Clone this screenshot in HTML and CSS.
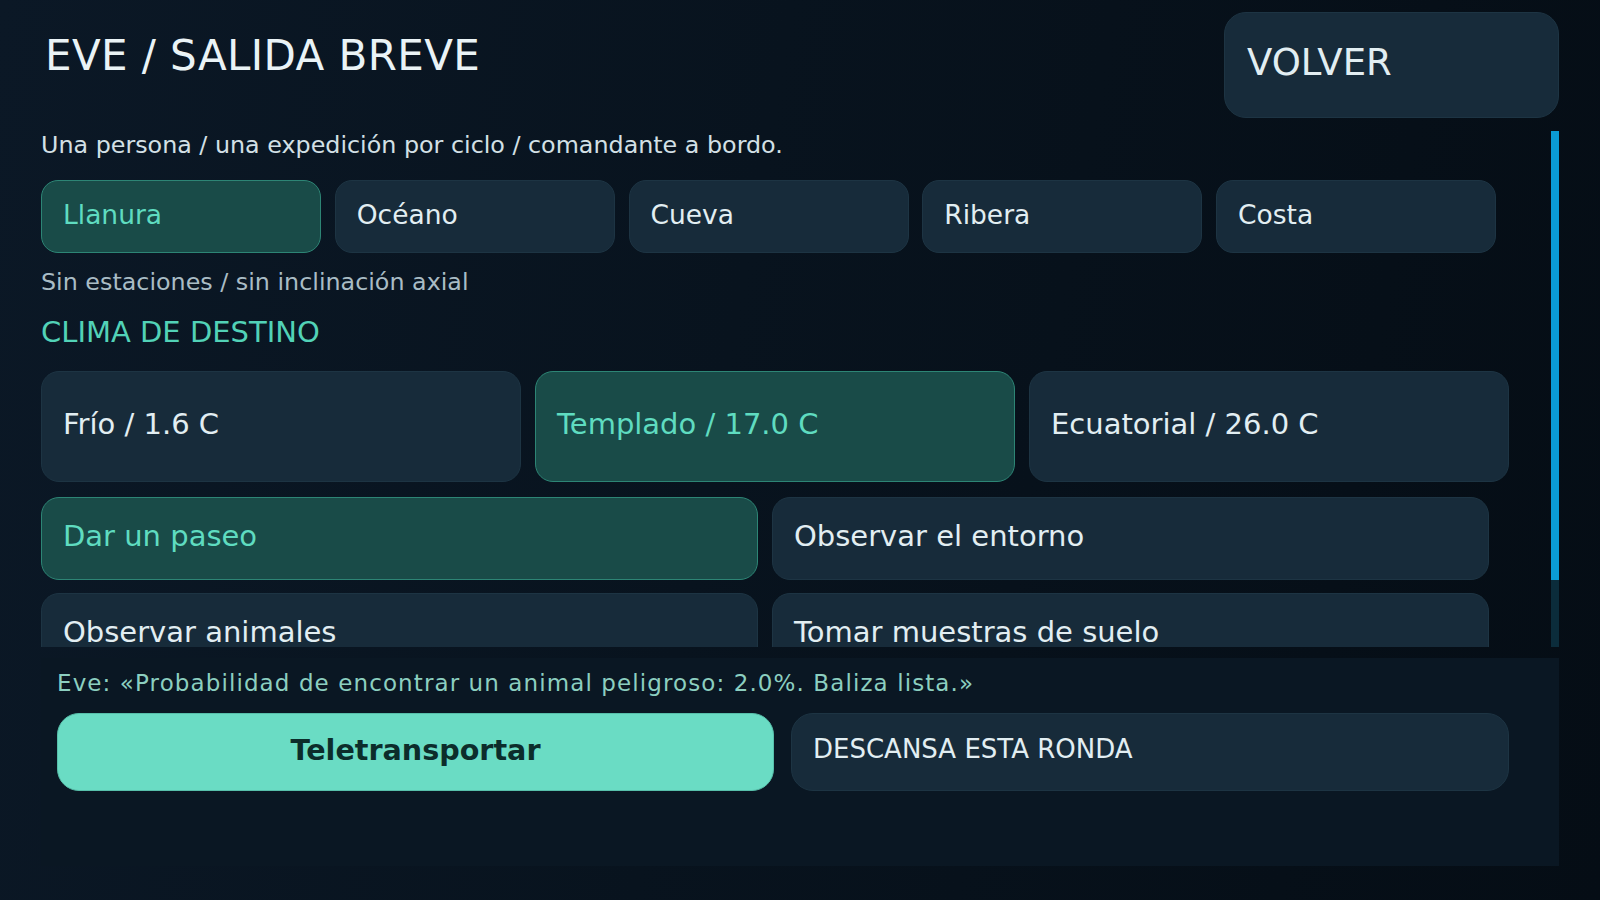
FILE: index.html
```html
<!DOCTYPE html>
<html lang="es">
<head>
<meta charset="utf-8">
<title>EVE / SALIDA BREVE</title>
<link rel="stylesheet" href="styles.css">
</head>
<body>
<div class="app">
  <header class="top">
    <h1 class="title">EVE / SALIDA BREVE</h1>
    <button class="btn back">VOLVER</button>
  </header>

  <div class="scroll-area">
    <div class="scroll">
      <p class="lead">Una persona / una expedición por ciclo / comandante a bordo.</p>
      <div class="chips">
        <button class="btn chip selected">Llanura</button>
        <button class="btn chip">Océano</button>
        <button class="btn chip">Cueva</button>
        <button class="btn chip">Ribera</button>
        <button class="btn chip">Costa</button>
      </div>
      <p class="note">Sin estaciones / sin inclinación axial</p>
      <h2 class="section">CLIMA DE DESTINO</h2>
      <div class="climates">
        <button class="btn climate">Frío / 1.6 C</button>
        <button class="btn climate selected">Templado / 17.0 C</button>
        <button class="btn climate">Ecuatorial / 26.0 C</button>
      </div>
      <div class="activities">
        <button class="btn activity selected">Dar un paseo</button>
        <button class="btn activity">Observar el entorno</button>
        <button class="btn activity">Observar animales</button>
        <button class="btn activity">Tomar muestras de suelo</button>
      </div>
    </div>
    <div class="scrollbar"><div class="thumb"></div></div>
  </div>

  <section class="panel">
    <p class="eve">Eve: «Probabilidad de encontrar un animal peligroso: 2.0%. Baliza lista.»</p>
    <div class="actions">
      <button class="btn primary">Teletransportar</button>
      <button class="btn secondary">DESCANSA ESTA RONDA</button>
    </div>
  </section>
</div>
</body>
</html>
```

FILE: styles.css
```css
* {
  box-sizing: border-box;
}

html, body {
  margin: 0;
  padding: 0;
  height: 100%;
}

body {
  font-family: "DejaVu Sans", "Liberation Sans", sans-serif;
  color: #e2eef2;
  background: linear-gradient(100deg, #0b1826 0%, #08131e 45%, #050d15 100%);
  overflow: hidden;
}

.app {
  width: 1600px;
  height: 900px;
  padding: 12px 41px 0 41px;
  display: flex;
  flex-direction: column;
}

.btn {
  font-family: inherit;
  color: #e2eef2;
  background: #172b3a;
  border: 1px solid #1d3443;
  text-align: left;
  cursor: pointer;
  display: flex;
  align-items: center;
  margin: 0;
}

.btn.selected {
  background: #194b48;
  border-color: #2d8575;
  color: #5fdcc0;
}

/* header */
.top {
  display: flex;
  justify-content: space-between;
  align-items: flex-start;
  height: 106px;
  flex: none;
}

.title {
  margin: 19px 0 0 4px;
  font-size: 42px;
  font-weight: normal;
  line-height: 50px;
  letter-spacing: 0.4px;
  color: #eaf3f6;
}

.back {
  width: 335px;
  height: 106px;
  border-radius: 22px;
  padding: 0 22px 6px 22px;
  font-size: 37px;
}

/* scroll region */
.scroll-area {
  margin-top: 13px;
  height: 516px;
  flex: none;
  display: flex;
}

.scroll {
  flex: 1;
  overflow: hidden;
}

.scrollbar {
  width: 8px;
  flex: none;
  background: #0b2c3b;
}

.thumb {
  height: 449px;
  background: #0a9bd5;
}

.lead {
  margin: 0;
  font-size: 23.8px;
  line-height: 28px;
  color: #d3e0e6;
}

.chips {
  margin-top: 21px;
  display: grid;
  grid-template-columns: repeat(5, 280px);
  gap: 13.75px;
}

.chip {
  height: 73px;
  border-radius: 17px;
  padding: 0 21px 5px 21px;
  font-size: 26.5px;
}

.note {
  margin: 15px 0 0 0;
  font-size: 23.8px;
  line-height: 28px;
  color: #a9bcc5;
}

.section {
  margin: 19px 0 0 0;
  font-size: 29px;
  font-weight: normal;
  line-height: 34px;
  color: #52d2b7;
}

.climates {
  margin-top: 22px;
  display: grid;
  grid-template-columns: repeat(3, 480px);
  gap: 14px;
}

.climate {
  height: 111px;
  border-radius: 18px;
  padding: 0 21px 6px 21px;
  font-size: 29px;
}

.activities {
  margin-top: 15px;
  display: grid;
  grid-template-columns: repeat(2, 717px);
  column-gap: 14px;
  row-gap: 13px;
}

.activity {
  height: 83px;
  border-radius: 18px;
  padding: 0 21px 6px 21px;
  font-size: 29px;
}

/* bottom panel */
.panel {
  margin-top: 11px;
  height: 208px;
  flex: none;
  background: #0a1723;
  padding: 12px 16px 0 16px;
}

.eve {
  margin: 0;
  font-size: 23px;
  line-height: 27px;
  letter-spacing: 1.1px;
  color: #8ccfc0;
}

.actions {
  margin-top: 16px;
  display: grid;
  grid-template-columns: 717px 718px;
  gap: 17px;
}

.primary {
  height: 78px;
  border-radius: 22px;
  background: #6adcc4;
  border-color: #57bfaa;
  color: #0c2d2b;
  font-weight: bold;
  font-size: 28.6px;
  justify-content: center;
  padding-bottom: 6px;
}

.secondary {
  height: 78px;
  border-radius: 22px;
  padding: 0 21px 6px 21px;
  font-size: 26px;
}
```
